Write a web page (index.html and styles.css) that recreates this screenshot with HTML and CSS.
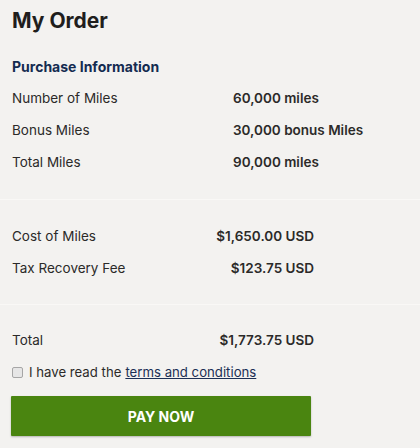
FILE: index.html
```html
<!DOCTYPE html>
<html lang="en">
<head>
  <meta charset="UTF-8">
  <title>My Order</title>
  <meta name="viewport" content="width=device-width, initial-scale=1.0"/>
  <link rel="stylesheet" href="styles.css">
</head>
<body>
  <div class="order">
    <h1>My Order</h1>
    <h2>Purchase Information</h2>

    <div class="section">
      <div class="row"><span class="label">Number of Miles</span><span class="value">60,000 miles</span></div>
      <div class="row"><span class="label">Bonus Miles</span><span class="value">30,000 bonus Miles</span></div>
      <div class="row"><span class="label">Total Miles</span><span class="value">90,000 miles</span></div>
    </div>

    <hr class="first">

    <div class="section money">
      <div class="row"><span class="label">Cost of Miles</span><span class="value">$1,650.00 USD</span></div>
      <div class="row"><span class="label">Tax Recovery Fee</span><span class="value">$123.75 USD</span></div>
    </div>

    <hr>

    <div class="section money">
      <div class="row"><span class="label">Total</span><span class="value">$1,773.75 USD</span></div>
    </div>

    <label class="terms">
      <input type="checkbox"> I have read the <a href="#">terms and conditions</a>
    </label>

    <button class="pay">PAY NOW</button>
  </div>
</body>
</html>
```

FILE: styles.css
```css
body {
  margin: 0;
  background-color: #f3f2f0;
  color: #2b2a29;
  font-family: 'Inter', 'Liberation Sans', sans-serif;
}
.order {
  padding: 8px 12px;
  width: 302px;
}
h1 {
  font-size: 21px;
  font-weight: 700;
  margin: 0;
  line-height: 26px;
  color: #1f1e1d;
}
h2 {
  font-size: 14px;
  font-weight: 700;
  color: #132b50;
  margin: 23px 0 5px;
  line-height: 20px;
}
.section {
  display: flex;
  flex-direction: column;
}
.row {
  display: flex;
  height: 32px;
  align-items: center;
  font-size: 13.5px;
  white-space: nowrap;
}
.label {
  width: 221px;
  flex-shrink: 0;
}
.value {
  font-weight: 600;
}
.money .label {
  width: auto;
  flex: 1;
}
.money .value {
  text-align: right;
}
hr {
  border: none;
  border-top: 1px solid #f9f8f6;
  margin: 20px -106px 19px -12px;
}
hr.first {
  margin: 21px -106px 20px -12px;
}
.terms {
  display: flex;
  align-items: center;
  font-size: 13.2px;
  height: 32px;
  white-space: nowrap;
}
.terms input {
  appearance: none;
  margin: 0 6px 0 0;
  width: 11px;
  height: 11px;
  border: 1px solid #a6a6a6;
  border-radius: 2px;
  background-color: #e6e6e6;
}
.terms a {
  color: #1b2f55;
  margin-left: 4px;
}
.pay {
  width: 300px;
  height: 40px;
  margin-top: 8px;
  margin-left: -1px;
  background-color: #4a8510;
  color: white;
  border: none;
  border-radius: 1px;
  font-family: inherit;
  font-size: 14px;
  font-weight: 700;
  box-shadow: 0 1px 2px rgba(0,0,0,0.25);
  cursor: pointer;
}
```
